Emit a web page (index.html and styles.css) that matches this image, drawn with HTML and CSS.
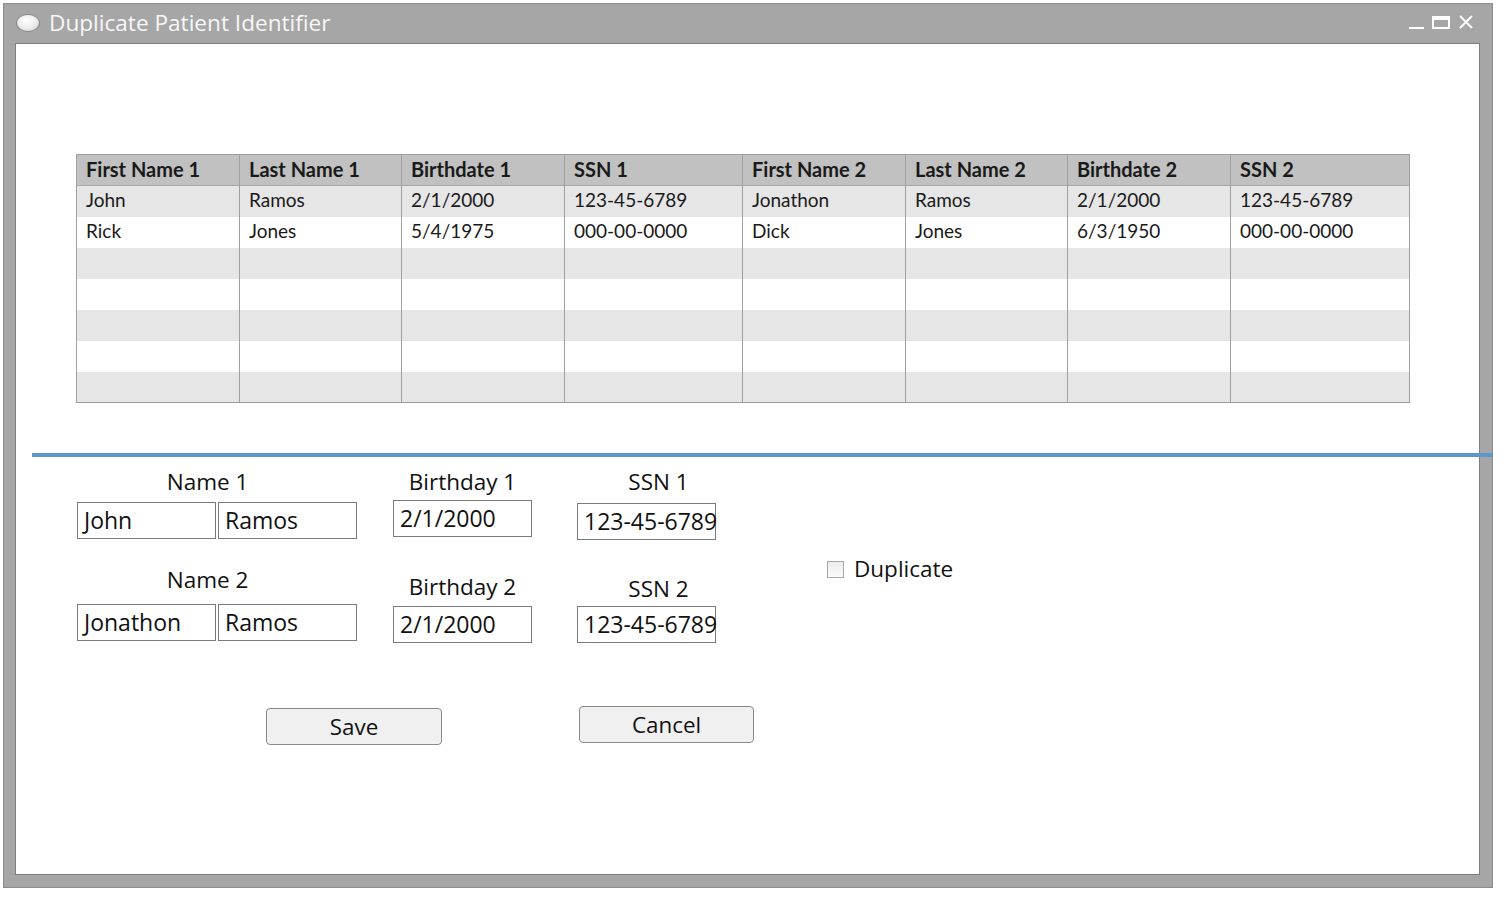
FILE: index.html
```html
<!DOCTYPE html>
<html>
<head>
<meta charset="utf-8">
<link rel="stylesheet" href="styles.css">
</head>
<body>
<div class="window">
  <div class="titlebar">
    <span class="app-icon"></span>
    <span class="title">Duplicate Patient Identifier</span>
    <div class="controls">
      <svg class="ctl" width="70" height="24" viewBox="0 0 70 24">
        <rect x="3" y="16" width="15" height="2" fill="#fff"/>
        <rect x="27" y="6" width="16" height="11" fill="none" stroke="#fff" stroke-width="2"/>
        <rect x="27" y="6" width="16" height="3" fill="#fff"/>
        <path d="M54 5 L66 17 M66 5 L54 17" stroke="#fff" stroke-width="2"/>
      </svg>
    </div>
  </div>
  <div class="content">
    <table class="grid">
      <colgroup>
        <col style="width:163px"><col style="width:162px"><col style="width:163px"><col style="width:178px">
        <col style="width:163px"><col style="width:162px"><col style="width:163px"><col style="width:179px">
      </colgroup>
      <thead>
        <tr><th>First Name 1</th><th>Last Name 1</th><th>Birthdate 1</th><th>SSN 1</th><th>First Name 2</th><th>Last Name 2</th><th>Birthdate 2</th><th>SSN 2</th></tr>
      </thead>
      <tbody>
        <tr><td>John</td><td>Ramos</td><td>2/1/2000</td><td>123-45-6789</td><td>Jonathon</td><td>Ramos</td><td>2/1/2000</td><td>123-45-6789</td></tr>
        <tr><td>Rick</td><td>Jones</td><td>5/4/1975</td><td>000-00-0000</td><td>Dick</td><td>Jones</td><td>6/3/1950</td><td>000-00-0000</td></tr>
        <tr><td></td><td></td><td></td><td></td><td></td><td></td><td></td><td></td></tr>
        <tr><td></td><td></td><td></td><td></td><td></td><td></td><td></td><td></td></tr>
        <tr><td></td><td></td><td></td><td></td><td></td><td></td><td></td><td></td></tr>
        <tr><td></td><td></td><td></td><td></td><td></td><td></td><td></td><td></td></tr>
        <tr><td></td><td></td><td></td><td></td><td></td><td></td><td></td><td></td></tr>
      </tbody>
    </table>

    <div class="divider"></div>

    <div class="form">
      <div class="fields">
        <div class="col col-name">
          <div class="label l1">Name 1</div>
          <div class="pair"><div class="box">John</div><div class="box">Ramos</div></div>
          <div class="label l2">Name 2</div>
          <div class="pair"><div class="box">Jonathon</div><div class="box">Ramos</div></div>
        </div>
        <div class="col col-bday">
          <div class="label l1">Birthday 1</div>
          <div class="box">2/1/2000</div>
          <div class="label l2">Birthday 2</div>
          <div class="box">2/1/2000</div>
        </div>
        <div class="col col-ssn">
          <div class="label l1">SSN 1</div>
          <div class="box">123-45-6789</div>
          <div class="label l2">SSN 2</div>
          <div class="box">123-45-6789</div>
        </div>
        <label class="dup"><span class="check"></span><span>Duplicate</span></label>
      </div>
      <div class="buttons">
        <button class="btn btn-save">Save</button>
        <button class="btn btn-cancel">Cancel</button>
      </div>
    </div>
  </div>
</div>
</body>
</html>
```

FILE: styles.css
```css
html, body {
  margin: 0;
  padding: 0;
  background: #ffffff;
}

.window {
  margin: 3px 0 0 3px;
  width: 1488px;
  height: 883px;
  background: #a6a6a6;
  border: 1px solid #8c8c8c;
  display: flex;
  flex-direction: column;
}

.titlebar {
  height: 39px;
  display: flex;
  align-items: center;
  position: relative;
  font-family: "Open Sans", "Noto Sans", sans-serif;
}

.app-icon {
  width: 24px;
  height: 18px;
  margin-left: 12px;
  border-radius: 50%;
  background: radial-gradient(ellipse at 45% 35%, #ffffff 0%, #f0f0f0 45%, #c8c8c8 100%);
  border: 1px solid #8a8a8a;
  box-sizing: border-box;
  margin-top: -1px;
}

.title {
  margin-left: 9px;
  color: #f7f7f7;
  font-size: 22.6px;
  margin-top: -2px;
}

.controls {
  position: absolute;
  right: 16px;
  top: 7px;
}

.ctl { display: block; }

.content {
  flex: 1;
  margin: 0 12px 12px 11px;
  background: #ffffff;
  border: 1px solid #7d7d7d;
  display: flex;
  flex-direction: column;
}

.grid {
  margin: 110px 0 0 60px;
  width: 1333px;
  border-collapse: collapse;
  table-layout: fixed;
  font-family: "Lato", "Liberation Sans", sans-serif;
  font-size: 19px;
  color: #1a1a1a;
  border: 1px solid #9a9a9a;
}

.grid th, .grid td {
  height: 31px;
  box-sizing: border-box;
  padding: 0 0 3px 9px;
  text-align: left;
  border-left: 1px solid #a0a0a0;
  border-right: 1px solid #a0a0a0;
  white-space: nowrap;
  overflow: hidden;
}

.grid th {
  background: #c1c1c1;
  font-weight: 700;
  font-size: 20px;
  border-bottom: 1px solid #a8a8a8;
}

.grid tbody tr:nth-child(odd) td { background: #e6e6e6; }
.grid tbody tr:nth-child(even) td { background: #ffffff; }

.divider {
  height: 4px;
  background: #5b97c9;
  margin: 50px -14px 0 16px;
}

.form {
  margin-left: 61px;
  font-family: "Open Sans", "Noto Sans", sans-serif;
  font-size: 22.5px;
  color: #111;
}

.fields {
  display: flex;
  align-items: flex-start;
  margin-top: 11px;
}

.col {
  display: flex;
  flex-direction: column;
}

.label {
  height: 28px;
  line-height: 28px;
  text-align: center;
  white-space: nowrap;
}

.pair {
  display: flex;
  gap: 2px;
}

.box {
  width: 139px;
  height: 37px;
  box-sizing: border-box;
  border: 1px solid #7a7a7a;
  padding-left: 6px;
  line-height: 35px;
  font-size: 23px;
  white-space: nowrap;
  overflow: visible;
  background: #fff;
}

.col-name { width: 280px; margin-right: 36px; }
.col-name .label { padding-right: 19px; }
.col-name .l1 { margin-bottom: 6px; }
.col-name .l2 { margin-top: 27px; margin-bottom: 10px; }

.col-bday { width: 139px; margin-right: 45px; }
.col-bday .l1 { margin-bottom: 4px; }
.col-bday .l2 { margin-top: 36px; margin-bottom: 5px; }

.col-ssn { width: 139px; margin-right: 111px; }
.col-ssn .label { padding-left: 24px; }
.col-ssn .l1 { margin-bottom: 7px; }
.col-ssn .l2 { margin-top: 35px; margin-bottom: 3px; }

.dup {
  display: flex;
  align-items: center;
  margin-top: 85px;
  gap: 10px;
}

.check {
  width: 15px;
  height: 15px;
  border: 1px solid #a8a8a8;
  background: linear-gradient(#ececec, #fafafa);
  display: inline-block;
  margin-top: 2px;
}

.buttons {
  display: flex;
  align-items: flex-start;
  margin: 63px 0 0 189px;
}

.btn {
  width: 176px;
  height: 37px;
  box-sizing: border-box;
  border: 1px solid #8a8a8a;
  border-radius: 4px;
  background: #f0f0f0;
  font-family: "Open Sans", "Noto Sans", sans-serif;
  font-size: 22.4px;
  color: #111;
  padding: 0;
}

.btn-save { margin-top: 2px; margin-right: 137px; }
.btn-cancel { width: 175px; }
```
